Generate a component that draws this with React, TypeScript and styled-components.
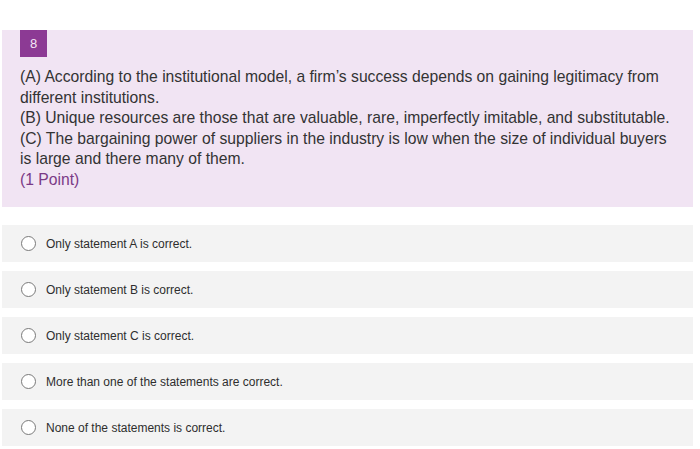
import styled, { createGlobalStyle } from 'styled-components';

const GlobalStyle = createGlobalStyle`
    html, body {
        margin: 0;
        padding: 0;
        background: #ffffff;
    }
    body {
        font-family: "Liberation Sans", Arial, sans-serif;
    }
`;

const Page = styled.div`
    width: 700px;
    height: 449px;
    padding: 30px 7px 0 2px;
    box-sizing: border-box;
    display: flex;
    flex-direction: column;
`;

const QuestionPanel = styled.div`
    background: #f1e4f3;
    height: 177px;
    box-sizing: border-box;
    padding: 0 18px 0 18px;
    display: flex;
    flex-direction: column;
`;

const Badge = styled.div`
    width: 27px;
    height: 27px;
    background: #8c3a94;
    color: #f4e6f5;
    font-size: 13px;
    display: flex;
    align-items: center;
    justify-content: center;
`;

const QuestionText = styled.div`
    margin-top: 10px;
    font-size: 15.7px;
    line-height: 20.5px;
    color: #333333;
`;

const Points = styled.div`
    color: #7b3a86;
`;

const Options = styled.div`
    display: flex;
    flex-direction: column;
    gap: 9px;
    margin-top: 18px;
`;

const OptionRow = styled.label`
    height: 37px;
    background: #f3f3f3;
    display: flex;
    align-items: center;
    padding-left: 19px;
    font-size: 12px;
    color: #2e2e2e;
    cursor: pointer;
`;

const Radio = styled.span`
    width: 13px;
    height: 13px;
    border: 1.5px solid #7a7a7a;
    border-radius: 50%;
    background: #ffffff;
    margin-right: 10px;
    flex-shrink: 0;
`;

const options = [
    'Only statement A is correct.',
    'Only statement B is correct.',
    'Only statement C is correct.',
    'More than one of the statements are correct.',
    'None of the statements is correct.'
];

export default function App(): JSX.Element {
    return (
        <>
            <GlobalStyle />
            <Page>
                <QuestionPanel>
                    <Badge>8</Badge>
                    <QuestionText>
                        <div>(A) According to the institutional model, a firm’s success depends on gaining legitimacy from different institutions.</div>
                        <div>(B) Unique resources are those that are valuable, rare, imperfectly imitable, and substitutable.</div>
                        <div>(C) The bargaining power of suppliers in the industry is low when the size of individual buyers is large and there many of them.</div>
                        <Points>(1 Point)</Points>
                    </QuestionText>
                </QuestionPanel>
                <Options>
                    {options.map((text, index) => (
                        <OptionRow key={index}>
                            <Radio />
                            {text}
                        </OptionRow>
                    ))}
                </Options>
            </Page>
        </>
    );
}
